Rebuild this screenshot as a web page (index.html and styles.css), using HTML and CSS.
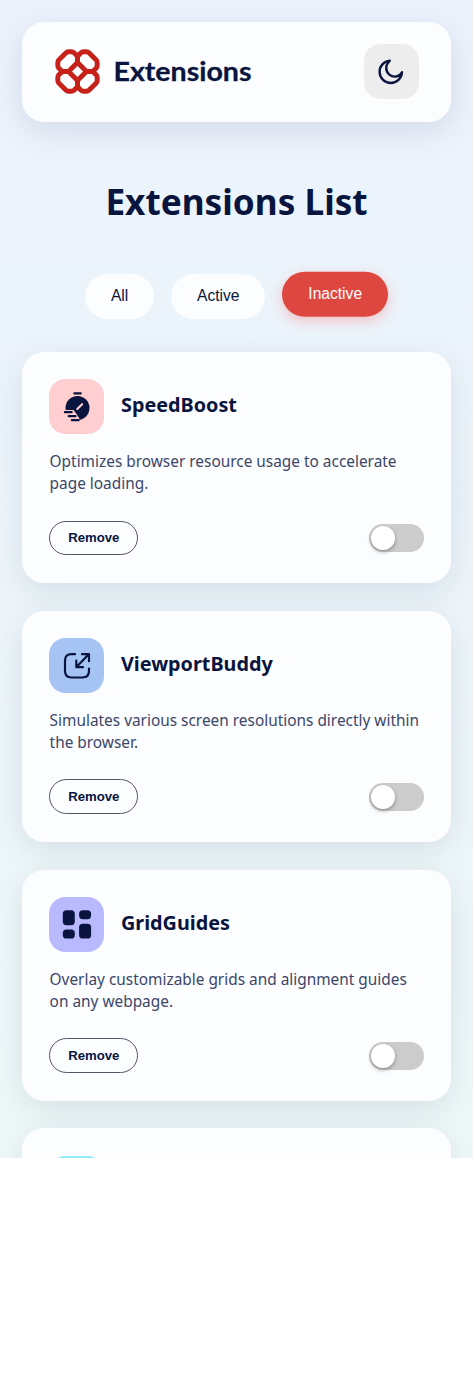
FILE: index.html
```html
<!DOCTYPE html>
<html lang="en">
<head>
<meta charset="utf-8">
<title>Extensions</title>
<link rel="stylesheet" href="styles.css">
</head>
<body>
<div class="screen">
  <header class="header">
    <svg class="logo" viewBox="0 0 200 46">
      <defs><path id="petal" d="M13.500 22.500 H8.500 Q7.200 22.500 6.200 21.500 L3.700 19 Q2.800 18 2.800 16.500 V13.500 Q2.800 12 4 10.800 L10.800 4 Q12 2.800 13.500 2.800 H16.500 Q18 2.800 19 3.700 L21.500 6.200 Q22.500 7.200 22.500 8.500 V13.500 Z"/></defs>
      <g fill="none" stroke="#c7221a" stroke-width="4.900" stroke-linejoin="round">
        <use href="#petal"/>
        <use href="#petal" transform="translate(45 0) scale(-1 1)"/>
        <use href="#petal" transform="translate(0 45) scale(1 -1)"/>
        <use href="#petal" transform="translate(45 45) scale(-1 -1)"/>
      </g>
      <text class="logo-text" x="58.500" y="32" textLength="138" lengthAdjust="spacingAndGlyphs">Extensions</text>
    </svg>
    <div class="theme">
      <svg width="26" height="26" viewBox="0 0 26 26" fill="none" stroke="#09153e" stroke-width="2.400" stroke-linejoin="round"><path d="M11.800 1.600 A11.200 11.200 0 1 0 24 13.300 C21.500 18 15.500 19 11.300 15.600 C7 12 7.300 5.800 11.800 1.600 Z"/></svg>
    </div>
  </header>
  <h1 class="title">Extensions List</h1>
  <nav class="filters">
    <button class="filter">All</button>
    <button class="filter">Active</button>
    <button class="filter selected">Inactive</button>
  </nav>
  <main class="cards">
    <article class="card">
      <div class="top">
        <div class="icon pink"><svg viewBox="0 0 55 55"><circle cx="28.500" cy="29" r="12" fill="#09153e"/><path d="M25.300 14.300h6.500" class="line"/><path d="M28.300 30l4.800-4.800" stroke="#ffced1" stroke-width="2.200" stroke-linecap="round"/><path d="M14 31h10.500l3 4 4 6.500h-14z" fill="#ffced1"/><path d="M15.900 33.200h6.800M19.700 37.200h6.800M22.900 41.200h6.800" class="line"/></svg></div>
        <h2 class="name">SpeedBoost</h2>
      </div>
      <p class="desc">Optimizes browser resource usage to accelerate page loading.</p>
      <div class="bottom"><button class="remove">Remove</button><span class="switch"><span class="knob"></span></span></div>
    </article>
    <article class="card">
      <div class="top">
        <div class="icon blue"><svg viewBox="0 0 55 55"><path d="M26 16.200h-3.500q-6.500 0-6.500 6.500V33q0 6.500 6.500 6.500h11q6.500 0 6.500-6.500v-2.500M27.500 29 39.500 16.500M33 16.200H40V23.200M27.300 22.500v6.700h6.700" class="line"/></svg></div>
        <h2 class="name">ViewportBuddy</h2>
      </div>
      <p class="desc">Simulates various screen resolutions directly within the browser.</p>
      <div class="bottom"><button class="remove">Remove</button><span class="switch"><span class="knob"></span></span></div>
    </article>
    <article class="card">
      <div class="top">
        <div class="icon purple"><svg viewBox="0 0 55 55" fill="#09153e"><rect x="13.800" y="13.200" width="12" height="15" rx="3.600"/><rect x="30.100" y="13.200" width="12" height="9" rx="3.600"/><rect x="13.800" y="32.500" width="12" height="9" rx="3.600"/><rect x="30.100" y="26.700" width="12" height="14.800" rx="3.600"/></svg></div>
        <h2 class="name">GridGuides</h2>
      </div>
      <p class="desc">Overlay customizable grids and alignment guides on any webpage.</p>
      <div class="bottom"><button class="remove">Remove</button><span class="switch"><span class="knob"></span></span></div>
    </article>
    <article class="card">
      <div class="top"><div class="icon cyan"></div></div>
    </article>
  </main>
</div>
</body>
</html>
```
FILE: styles.css
```css
* { box-sizing: border-box; }
body { margin: 0; background: #fff; font-family: "Noto Sans", sans-serif; color: #09153e; }
.screen { height: 1158px; overflow: hidden; padding: 22px; background: linear-gradient(180deg, #ebf2fc 0%, #eef8f9 100%); }
.header { height: 99.5px; padding: 0 32.4px 0 33px; display: flex; align-items: center; justify-content: space-between; background: #fcfdff; border-radius: 22px; box-shadow: 0 9px 33px rgba(9, 21, 62, .1); }
.logo { width: 200px; height: 46px; display: block; }
.logo-text { font-family: Lato, sans-serif; font-weight: 700; font-size: 26.5px; fill: #09153e; stroke: #09153e; stroke-width: .3px; }
.theme { width: 55px; height: 55px; border-radius: 16.5px; background: #ededed; display: flex; align-items: center; justify-content: center; }
.title { margin: 55px 0 0; font-size: 35.2px; line-height: 48px; font-weight: 700; text-align: center; }
.filters { display: flex; justify-content: center; gap: 17px; margin-top: 49.5px; }
.filter { height: 44.5px; padding: 0 25.9px; border: 0; border-radius: 23px; background: #fcfdff; color: #09153e; font: 15.6px "Liberation Sans", sans-serif; }
.selected { background: #de473f; color: #fcfdff; transform: translateY(-2.2px); box-shadow: 0 4.4px 13px rgba(255, 80, 80, .3); }
.cards { margin-top: 33.5px; display: flex; flex-direction: column; gap: 27.5px; }
.card { flex: none; height: 231.3px; padding: 27.3px; border-radius: 22px; background: #fcfdff; box-shadow: 0 9px 33px rgba(9, 30, 50, .1); }
.top { display: flex; align-items: center; gap: 16.5px; }
.icon { width: 55.2px; height: 55px; border-radius: 16.5px; overflow: hidden; }
.icon svg { display: block; width: 55px; height: 55px; }
.line { fill: none; stroke: #09153e; stroke-width: 2.2; stroke-linecap: round; stroke-linejoin: round; }
.pink { background: #ffced1; }
.blue { background: #a5c4f4; }
.purple { background: #b9b9ff; }
.cyan { background: #8eeef4; }
.name { margin: 0 0 4.5px; font-size: 19.8px; line-height: 27px; font-weight: 700; }
.desc { margin: 16.7px 0 25.7px; padding-left: .3px; font-size: 15.4px; line-height: 22px; color: #3b4668; }
.bottom { display: flex; align-items: center; justify-content: space-between; }
.remove { width: 89px; height: 34.5px; padding: 0; border: 1px solid #545466; border-radius: 18px; background: transparent; color: #09153e; font: bold 13.2px "Liberation Sans", sans-serif; }
.switch { width: 55px; height: 28px; padding: 2.2px; border-radius: 14px; background: #ccc; }
.knob { display: block; width: 24px; height: 24px; border-radius: 50%; background: #fff; box-shadow: 0 2px 4px rgba(0, 0, 0, .3); }
```
